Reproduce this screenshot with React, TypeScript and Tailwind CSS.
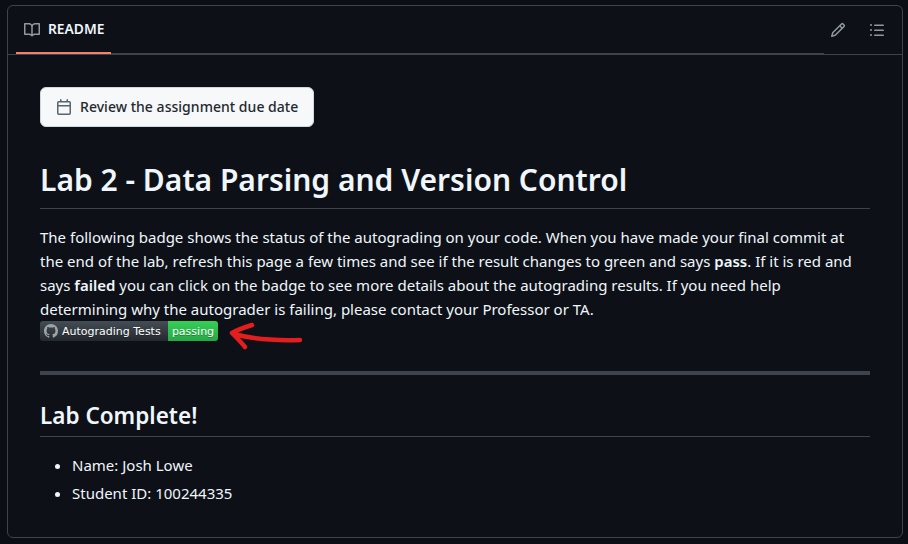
const FONT = "font-['Noto_Sans','Open_Sans',sans-serif]";

function Octicon({ d, className }: { d: string; className?: string }) {
  return (
    <svg viewBox="0 0 16 16" width="16" height="16" fill="currentColor" className={`shrink-0 ${className ?? ""}`}>
      <path fillRule="evenodd" d={d} />
    </svg>
  );
}

const BOOK = "M0 1.75A.75.75 0 0 1 .75 1h4.253c1.227 0 2.317.59 3 1.501A3.743 3.743 0 0 1 11.006 1h4.245a.75.75 0 0 1 .75.75v10.5a.75.75 0 0 1-.75.75h-4.507a2.25 2.25 0 0 0-1.591.659l-.622.621a.75.75 0 0 1-1.06 0l-.622-.621A2.25 2.25 0 0 0 5.258 13H.75a.75.75 0 0 1-.75-.75Zm7.251 10.324.004-5.073-.002-2.253A2.25 2.25 0 0 0 5.003 2.5H1.5v9h3.757a3.75 3.75 0 0 1 1.994.574ZM8.755 4.75l-.004 7.322a3.752 3.752 0 0 1 1.992-.572H14.5v-9h-3.495a2.25 2.25 0 0 0-2.25 2.25Z";
const PENCIL = "M11.013 1.427a1.75 1.75 0 0 1 2.474 0l1.086 1.086a1.75 1.75 0 0 1 0 2.474l-8.61 8.61c-.21.21-.47.364-.756.445l-3.251.93a.75.75 0 0 1-.927-.928l.929-3.25c.081-.286.235-.547.445-.758l8.61-8.61Zm.176 4.823L9.75 4.81l-6.286 6.287a.253.253 0 0 0-.064.108l-.558 1.953 1.953-.558a.253.253 0 0 0 .108-.064Zm1.238-3.763a.25.25 0 0 0-.354 0L10.811 3.75l1.439 1.44 1.263-1.263a.25.25 0 0 0 0-.354Z";
const LIST = "M5.75 2.5h8.5a.75.75 0 0 1 0 1.5h-8.5a.75.75 0 0 1 0-1.5Zm0 5h8.5a.75.75 0 0 1 0 1.5h-8.5a.75.75 0 0 1 0-1.5Zm0 5h8.5a.75.75 0 0 1 0 1.5h-8.5a.75.75 0 0 1 0-1.5ZM2 14a1 1 0 1 1 0-2 1 1 0 0 1 0 2Zm1-6a1 1 0 1 1-2 0 1 1 0 0 1 2 0ZM2 4a1 1 0 1 1 0-2 1 1 0 0 1 0 2Z";
const CAL = "M4.75 0a.75.75 0 0 1 .75.75V2h5V.75a.75.75 0 0 1 1.5 0V2h1.25c.966 0 1.75.784 1.75 1.75v10.5A1.75 1.75 0 0 1 13.25 16H2.75A1.75 1.75 0 0 1 1 14.25V3.75C1 2.784 1.784 2 2.75 2H4V.75A.75.75 0 0 1 4.75 0ZM2.5 7.5v6.75c0 .138.112.25.25.25h10.5a.25.25 0 0 0 .25-.25V7.5Zm10.75-4H2.75a.25.25 0 0 0-.25.25V6h11V3.75a.25.25 0 0 0-.25-.25Z";
const GH = "M8 0c4.42 0 8 3.58 8 8a8.013 8.013 0 0 1-5.45 7.59c-.4.08-.55-.17-.55-.38 0-.27.01-1.13.01-2.2 0-.75-.25-1.23-.54-1.48 1.78-.2 3.65-.88 3.65-3.95 0-.88-.31-1.59-.82-2.15.08-.2.36-1.02-.08-2.12 0 0-.67-.22-2.2.82-.64-.18-1.32-.27-2-.27-.68 0-1.36.09-2 .27-1.53-1.03-2.2-.82-2.2-.82-.44 1.1-.16 1.92-.08 2.12-.51.56-.82 1.28-.82 2.15 0 3.06 1.86 3.75 3.64 3.95-.23.2-.44.55-.51 1.07-.46.21-1.61.55-2.33-.66-.15-.24-.6-.83-1.23-.82-.67.01-.27.38.01.53.34.19.73.9.82 1.13.16.45.68 1.31 2.69.94 0 .67.01 1.3.01 1.49 0 .21-.15.45-.55.38A7.995 7.995 0 0 1 0 8c0-4.42 3.58-8 8-8Z";

export default function App() {
  return (
    <div className={`h-[544px] w-[908px] overflow-hidden bg-[#0b0e14] pl-[7px] pr-[5px] pt-[5px] ${FONT}`}>
      <div className="h-[533px] rounded-md border border-[#3d444d] bg-[#0d1117]">
        <div className="flex h-[49px] border-b border-[#3d444d] pl-2 pr-[17px]">
          <div className="h-[48px] w-[808px] shrink-0 border-b border-[#3d444d]">
            <div className="flex h-[48px] w-[95px] items-center gap-2 border-b-2 border-[#f78166] pl-2 pt-px">
              <Octicon d={BOOK} className="text-[#9198a1]" />
              <span className="text-[13.8px] font-semibold text-[#f0f6fc]">README</span>
            </div>
          </div>
          <div className="flex flex-1 items-center justify-end gap-[23px]">
            <Octicon d={PENCIL} className="text-[#9198a1]" />
            <Octicon d={LIST} className="text-[#9198a1]" />
          </div>
        </div>
        <div className="px-8 pt-[32px] text-[15px] leading-6 text-[#f0f6fc]">
          <div className="inline-flex h-10 w-[274px] items-center gap-2 rounded-md border border-[#d1d9e0] bg-[#f6f8fa] px-[15px] text-[14px] font-medium tracking-[0.03px] text-[#25292e]">
            <Octicon d={CAL} className="text-[#59636e]" />
            <span className="whitespace-nowrap">Review the assignment due date</span>
          </div>
          <h1 className="mt-[33px] border-b border-[#3d444d] pb-[8px] text-[30px] font-semibold leading-[40px]">
            Lab 2 - Data Parsing and Version Control
          </h1>
          <p className="mt-4">
            The following badge shows the status of the autograding on your code. When you have made your final commit at the end of the lab, refresh this page a few times and see if the result changes to green and says <b className="font-semibold">pass</b>. If it is red and says <b className="font-semibold">failed</b> you can click on the badge to see more details about the autograding results. If you need help determining why the autograder is failing, please contact your Professor or TA.
          </p>
          <div className="flex h-5 items-center">
            <div className="flex h-5 overflow-hidden rounded-[3px] font-['DejaVu_Sans',sans-serif] text-[11px] leading-[21px] text-white [text-shadow:0_1px_0_rgba(1,1,1,0.3)]">
              <div className="flex w-[128px] items-center gap-[4px] bg-gradient-to-b from-[#444d56] to-[#24292e] pl-[4px]">
                <Octicon d={GH} className="h-[14px] w-[14px] text-[#9ea3a8]" />
                <span className="whitespace-nowrap">Autograding Tests</span>
              </div>
              <div className="w-[50px] bg-gradient-to-b from-[#34d058] to-[#28a745] text-center">passing</div>
            </div>
            <svg width="76" height="38" viewBox="0 0 76 38" className="ml-[10px] shrink-0">
              <path d="M72 28C55 28.500 30 28.500 8 22.500M24 13C16 15.500 9 18 4 21C8 25 13 30 17 35" fill="none" stroke="#e41e1e" strokeWidth="4.500" strokeLinecap="round" strokeLinejoin="round" />
            </svg>
          </div>
          <hr className="mt-[30px] h-1 border-0 bg-[#3d444d]" />
          <h2 className="mt-[26px] border-b border-[#3d444d] pb-[5px] text-[22.5px] font-semibold leading-[30px]">Lab Complete!</h2>
          <ul className="mt-4 list-disc pl-8">
            <li>Name: Josh Lowe</li>
            <li className="mt-1">Student ID: 100244335</li>
          </ul>
        </div>
      </div>
    </div>
  );
}
